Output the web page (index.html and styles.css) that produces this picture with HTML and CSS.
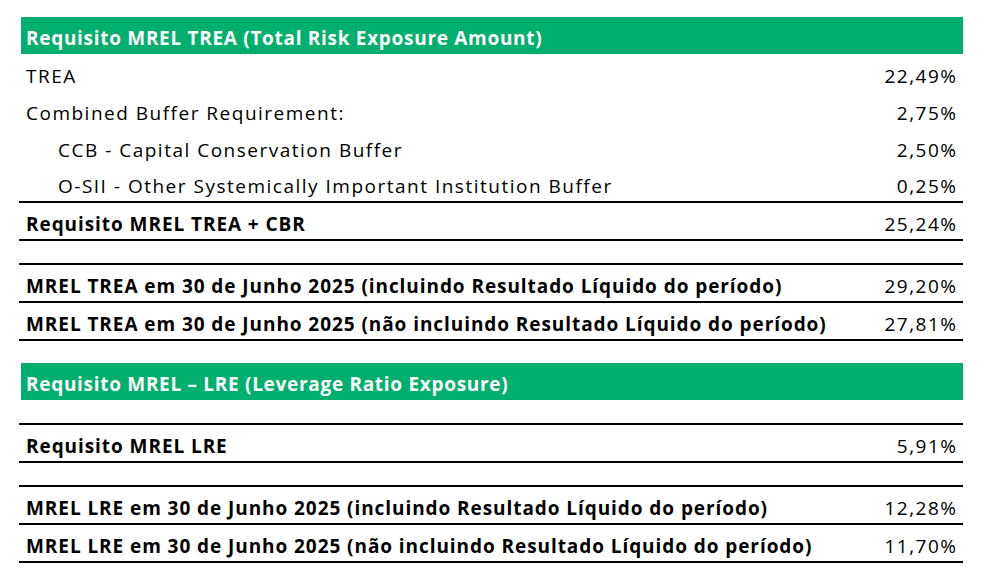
FILE: index.html
```html
<!DOCTYPE html>
<html lang="pt">
<head>
<meta charset="utf-8">
<title>Requisito MREL</title>
<link rel="stylesheet" href="styles.css">
</head>
<body>
<div class="sheet">
  <div class="head">Requisito MREL TREA (Total Risk Exposure Amount)</div>
  <div class="row"><span class="label">TREA</span><span class="val">22,49%</span></div>
  <div class="row"><span class="label">Combined Buffer Requirement:</span><span class="val">2,75%</span></div>
  <div class="row"><span class="label indent">CCB - Capital Conservation Buffer</span><span class="val">2,50%</span></div>
  <div class="row line-b"><span class="label indent">O-SII - Other Systemically Important Institution Buffer</span><span class="val">0,25%</span></div>
  <div class="row line-b bold"><span class="label">Requisito MREL TREA + CBR</span><span class="val">25,24%</span></div>
  <div class="gap"></div>
  <div class="row line-t line-b bold"><span class="label">MREL TREA em 30 de Junho 2025 (incluindo Resultado Líquido do período)</span><span class="val">29,20%</span></div>
  <div class="row line-b bold"><span class="label">MREL TREA em 30 de Junho 2025 (não incluindo Resultado Líquido do período)</span><span class="val">27,81%</span></div>
  <div class="gap"></div>
  <div class="head">Requisito MREL – LRE (Leverage Ratio Exposure)</div>
  <div class="gap"></div>
  <div class="row line-t line-b bold"><span class="label">Requisito MREL LRE</span><span class="val">5,91%</span></div>
  <div class="gap"></div>
  <div class="row line-t line-b bold"><span class="label">MREL LRE em 30 de Junho 2025 (incluindo Resultado Líquido do período)</span><span class="val">12,28%</span></div>
  <div class="row line-b bold"><span class="label">MREL LRE em 30 de Junho 2025 (não incluindo Resultado Líquido do período)</span><span class="val">11,70%</span></div>
</div>
</body>
</html>
```
FILE: styles.css
```css
html, body {
  margin: 0;
  padding: 0;
  background: #ffffff;
}
body {
  font-family: "Open Sans", "Liberation Sans", Arial, sans-serif;
  font-size: 19px;
  color: #000000;
  letter-spacing: 1.5px;
}
.sheet {
  width: 944px;
  margin: 17px 0 0 19px;
  display: flex;
  flex-direction: column;
}
.head {
  margin-left: 2px;
  height: 37px;
  box-sizing: border-box;
  background: #00ae6d;
  color: #ffffff;
  font-weight: bold;
  padding: 0 0 5px 5px;
  display: flex;
  align-items: flex-end;
  line-height: 22px;
  letter-spacing: 0.7px;
}
.row {
  box-sizing: border-box;
  height: 37px;
  display: flex;
  justify-content: space-between;
  align-items: flex-end;
  padding: 0 4.5px 4px 7px;
  line-height: 22px;
}
.row.line-b {
  border-bottom: 2px solid #000000;
  height: 38px;
}
.row.line-t {
  border-top: 2px solid #000000;
  height: 40px;
}
.indent {
  padding-left: 32px;
}
.bold .label {
  font-weight: bold;
  letter-spacing: 0.93px;
}
.val {
  font-weight: normal;
  padding-right: 1px;
}
.gap {
  height: 22px;
}
.head + .gap {
  height: 23px;
}
```
